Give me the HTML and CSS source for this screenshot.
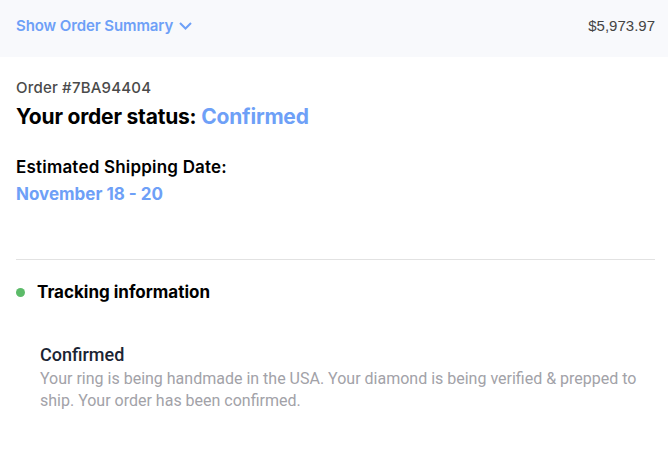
FILE: index.html
```html
<!DOCTYPE html>
<html>
<head>
<meta charset="utf-8">
<link rel="stylesheet" href="styles.css">
</head>
<body>
<header class="summary-bar">
  <button class="summary-toggle">Show Order Summary
    <svg class="chev" width="13" height="8" viewBox="0 0 13 8"><path d="M1 1l5.5 5.5L12 1" fill="none" stroke="currentColor" stroke-width="2"/></svg>
  </button>
  <span class="total">$5,973.97</span>
</header>
<main class="content">
  <section class="status">
    <p class="order-no">Order #7BA94404</p>
    <h1 class="status-title">Your order status: <span class="accent">Confirmed</span></h1>
    <h2 class="ship-label">Estimated Shipping Date:</h2>
    <p class="ship-date">November 18 - 20</p>
  </section>
  <hr class="divider">
  <section class="tracking">
    <h3 class="tracking-title"><span class="dot"></span>Tracking information</h3>
    <div class="step">
      <h4 class="step-title">Confirmed</h4>
      <p class="step-text">Your ring is being handmade in the USA. Your diamond is being verified &amp; prepped to ship. Your order has been confirmed.</p>
    </div>
  </section>
</main>
</body>
</html>
```

FILE: styles.css
```css
* { box-sizing: border-box; }
html, body { margin: 0; padding: 0; background: #fff; }
body { font-family: "Inter", "DejaVu Sans", sans-serif; color: #111; }

.summary-bar {
  height: 57px;
  background: #f8f9fc;
  display: flex;
  align-items: center;
  justify-content: space-between;
  padding: 0 13px 0 16px;
}
.summary-toggle {
  border: 0; background: none; padding: 0;
  font-family: "Inter", sans-serif;
  font-weight: 600;
  font-size: 15px;
  letter-spacing: -0.1px;
  color: #6ea0f7;
  display: flex; align-items: center; gap: 6px;
  margin-top: -6px;
}
.chev { margin-top: 1px; }
.total {
  font-family: "Liberation Sans", Arial, sans-serif;
  font-size: 15px;
  color: #444;
  margin-top: -6px;
}

.content { padding: 0 13px 0 16px; }
.status { padding-top: 20px; padding-bottom: 54px; }
.order-no {
  margin: 0;
  font-size: 15px;
  font-weight: 500;
  letter-spacing: 0.2px;
  color: #4a4a4a;
  line-height: 21px;
}
.status-title {
  margin: 5px 0 0;
  font-size: 21px;
  font-weight: 700;
  letter-spacing: -0.2px;
  line-height: 27px;
  color: #000;
}
.accent { color: #6ea0f7; }
.ship-label {
  margin: 26px 0 0;
  font-size: 17px;
  font-weight: 600;
  letter-spacing: 0.2px;
  line-height: 22px;
  color: #000;
}
.ship-date {
  margin: 5px 0 0;
  font-size: 17px;
  font-weight: 700;
  line-height: 22px;
  color: #6ea0f7;
}
.divider { border: 0; border-top: 1px solid #e2e2e2; margin: 0; }

.tracking-title {
  margin: 21px 0 0;
  display: flex; align-items: center;
  font-size: 17px; font-weight: 700; line-height: 22px; color: #000;
}
.dot { width: 9px; height: 9px; border-radius: 50%; background: #5cbb69; margin-right: 12px; }
.step { padding: 41px 0 0 24px; }
.step-title {
  margin: 0;
  font-family: "Roboto", sans-serif;
  font-size: 18px; font-weight: 500; color: #1b2433; line-height: 22px;
}
.step-text {
  margin: 2px 0 0;
  font-family: "Roboto", sans-serif;
  font-size: 16px; color: #a2a2a8; line-height: 22px;
}
```
